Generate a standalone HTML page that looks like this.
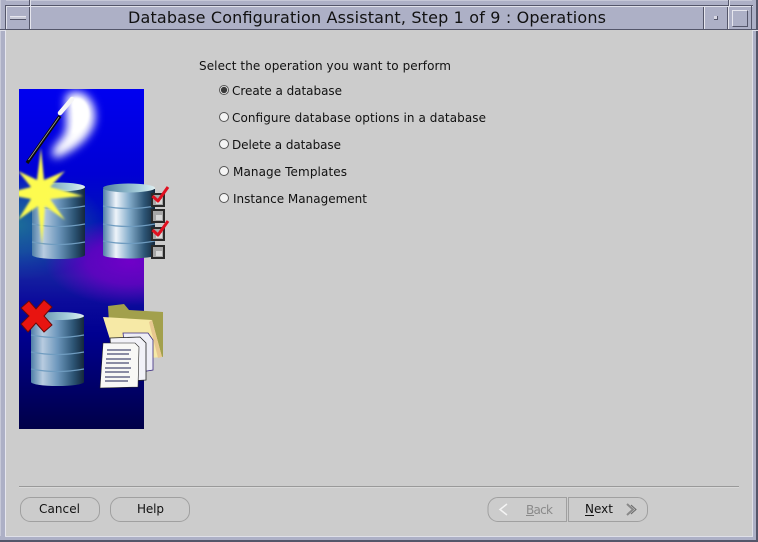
<!DOCTYPE html>
<html><head><meta charset="utf-8"><title>Database Configuration Assistant</title>
<style>html,body{margin:0;padding:0;background:#ccc;width:758px;height:542px;overflow:hidden}svg{display:block}
text{font-family:"DejaVu Sans","Liberation Sans",sans-serif;fill:#111}</style></head><body>
<svg width="758" height="542" viewBox="0 0 758 542" xmlns="http://www.w3.org/2000/svg" shape-rendering="crispEdges">
<defs>
<linearGradient id="bg" x1="0" y1="0" x2="0" y2="1">
<stop offset="0" stop-color="#0000f0"/><stop offset=".25" stop-color="#0000d4"/><stop offset=".42" stop-color="#0016b0"/><stop offset=".55" stop-color="#1420a0"/><stop offset=".62" stop-color="#0c0c9c"/><stop offset=".72" stop-color="#000090"/><stop offset="1" stop-color="#000048"/>
</linearGradient>
<radialGradient id="pur"><stop offset="0" stop-color="#7000c8"/><stop offset=".5" stop-color="#6c00c4" stop-opacity=".8"/><stop offset="1" stop-color="#6c00c4" stop-opacity="0"/></radialGradient>
<radialGradient id="teal"><stop offset="0" stop-color="#1c6e98"/><stop offset=".5" stop-color="#1c629c" stop-opacity=".7"/><stop offset="1" stop-color="#1a58a0" stop-opacity="0"/></radialGradient>
<linearGradient id="cyl" x1="0" y1="0" x2="1" y2="0"><stop offset="0" stop-color="#4f7fa8"/><stop offset=".25" stop-color="#eef4fa"/><stop offset=".5" stop-color="#86aecc"/><stop offset=".8" stop-color="#2c5474"/><stop offset="1" stop-color="#14283c"/></linearGradient>
<linearGradient id="cyl2" x1="0" y1="0" x2="1" y2="0"><stop offset="0" stop-color="#4f7fa8"/><stop offset=".22" stop-color="#b8cce0"/><stop offset=".5" stop-color="#6d97bc"/><stop offset=".8" stop-color="#2c5474"/><stop offset="1" stop-color="#14283c"/></linearGradient>
<linearGradient id="top" x1="0" y1="0" x2="1" y2="0"><stop offset="0" stop-color="#4f7f9e"/><stop offset=".7" stop-color="#a8d0dc"/><stop offset="1" stop-color="#dfeef0"/></linearGradient>
<filter id="bl" x="-60%" y="-60%" width="220%" height="220%"><feGaussianBlur stdDeviation="4.500"/></filter>
<filter id="bl2" x="-50%" y="-50%" width="200%" height="200%"><feGaussianBlur stdDeviation="1"/></filter>
<clipPath id="im"><rect x="19" y="89" width="125" height="340"/></clipPath>
</defs>

<rect width="758" height="542" fill="#ccc"/>
<!-- frame -->
<rect x="0" y="0" width="758" height="6" fill="#adb0c6"/>
<rect x="0" y="0" width="758" height="1" fill="#c6c8d8"/>
<rect x="0" y="0" width="6" height="542" fill="#adb0c6"/>
<rect x="0" y="0" width="1" height="537" fill="#c6c8d8"/>
<rect x="752" y="0" width="6" height="542" fill="#adb0c6"/>
<rect x="0" y="536" width="758" height="6" fill="#adb0c6"/>
<rect x="0" y="540" width="758" height="2" fill="#54566a"/>
<rect x="756" y="0" width="2" height="542" fill="#54566a"/>
<rect x="5" y="30" width="1" height="507" fill="#e6e6ee"/>
<rect x="5" y="536" width="748" height="1" fill="#dfe0e8"/>
<rect x="752" y="30" width="1" height="507" fill="#dfe0e8"/>
<!-- title bar -->
<rect x="6" y="6" width="746" height="23" fill="#adb0c6"/>
<rect x="5" y="5" width="748" height="1" fill="#54566a"/>
<rect x="5" y="6" width="748" height="1" fill="#e0e1ea"/>
<rect x="5" y="5" width="1" height="25" fill="#54566a"/>
<rect x="6" y="6" width="1" height="24" fill="#e0e1ea"/>
<rect x="6" y="29" width="746" height="1" fill="#54566a"/>
<rect x="751" y="6" width="1" height="24" fill="#54566a"/>
<rect x="0" y="29" width="6" height="1" fill="#54566a"/>
<rect x="0" y="30" width="6" height="1" fill="#e0e1ea"/>
<rect x="752" y="29" width="6" height="1" fill="#54566a"/>
<rect x="752" y="30" width="6" height="1" fill="#e0e1ea"/>
<rect x="29" y="0" width="1" height="6" fill="#54566a"/>
<rect x="30" y="0" width="1" height="6" fill="#e0e1ea"/>
<rect x="728" y="0" width="1" height="6" fill="#54566a"/>
<rect x="729" y="0" width="1" height="6" fill="#e0e1ea"/>
<rect x="29" y="7" width="1" height="22" fill="#54566a"/>
<rect x="30" y="7" width="1" height="22" fill="#e6e6ee"/>
<rect x="703" y="7" width="1" height="22" fill="#54566a"/>
<rect x="704" y="7" width="1" height="22" fill="#e6e6ee"/>
<rect x="727" y="7" width="1" height="22" fill="#54566a"/>
<rect x="728" y="7" width="1" height="22" fill="#e6e6ee"/>
<!-- window controls -->
<rect x="10" y="16" width="16" height="3" fill="#c8cad8"/>
<rect x="10" y="16" width="16" height="1" fill="#e6e6ee"/>
<rect x="10" y="19" width="16" height="1" fill="#54566a"/>
<rect x="714" y="16" width="4" height="4" fill="#d8d8e4"/>
<rect x="714" y="19" width="4" height="1" fill="#54566a"/>
<rect x="717" y="16" width="1" height="4" fill="#54566a"/>
<path d="M732 26V10H748" fill="none" stroke="#e6e6ee" transform="translate(.5 .5)"/>
<path d="M732 26H747V10" fill="none" stroke="#54566a" transform="translate(.5 .5)"/>
<g shape-rendering="auto">
<text x="128" y="23" font-size="16" textLength="478" lengthAdjust="spacing">Database Configuration Assistant, Step 1 of 9 : Operations</text>
<text x="199" y="70" font-size="12" textLength="252" lengthAdjust="spacing">Select the operation you want to perform</text>
<text x="232" y="95" font-size="12" textLength="110" lengthAdjust="spacing">Create a database</text>
<text x="232" y="122" font-size="12" textLength="254" lengthAdjust="spacing">Configure database options in a database</text>
<text x="232" y="149" font-size="12" textLength="109" lengthAdjust="spacing">Delete a database</text>
<text x="233" y="176" font-size="12" textLength="114" lengthAdjust="spacing">Manage Templates</text>
<text x="233" y="203" font-size="12" textLength="134" lengthAdjust="spacing">Instance Management</text>
<!-- radios -->
<g stroke="#555" stroke-width="1" fill="#f4f4f4">
<circle cx="224" cy="90" r="4.500"/><circle cx="224" cy="117" r="4.500"/><circle cx="224" cy="144" r="4.500"/><circle cx="224" cy="171" r="4.500"/><circle cx="224" cy="198" r="4.500"/>
</g>
<circle cx="224" cy="90" r="3.200" fill="#3a3a3a"/>

<!-- picture -->
<g clip-path="url(#im)">
<rect x="19" y="89" width="125" height="340" fill="url(#bg)"/>
<ellipse cx="15" cy="225" rx="90" ry="55" fill="url(#teal)"/>
<ellipse cx="130" cy="262" rx="85" ry="44" fill="url(#pur)"/>
<!-- glow -->
<path d="M68 94C82 86 96 100 95 118C94 134 78 150 56 158C48 156 54 146 60 140C68 132 66 124 66 114C66 104 64 98 68 94Z" fill="#fff" filter="url(#bl)"/>
<path d="M72 98C84 96 90 106 89 116C88 126 80 132 72 134C74 124 74 112 72 106Z" fill="#fff" filter="url(#bl2)"/>
<!-- wand -->
<path d="M27 163L60 116" stroke="#0c0c0c" stroke-width="3.400" fill="none"/>
<path d="M28.500 160L59 117" stroke="#a0a0a0" stroke-width=".8" fill="none"/>
<path d="M60 113L72 99" stroke="#f6f6f6" stroke-width="4.500" stroke-linecap="round" fill="none"/>
<!-- cylinder 1 -->
<rect x="32" y="187" width="53" height="68" fill="url(#cyl2)"/>
<ellipse cx="58.500" cy="255" rx="26.500" ry="4" fill="url(#cyl2)"/>
<ellipse cx="58.500" cy="187" rx="26.500" ry="4.500" fill="url(#top)"/>
<g fill="none" stroke="#6f9cc0" stroke-width="1.200"><path d="M32 206Q58 211 85 206"/><path d="M32 224Q58 229 85 224"/><path d="M32 242Q58 247 85 242"/></g>
<!-- star -->
<path d="M41 148L44 180L65 171L50 187L83 196L50 199L65 220L45 206L42 245L38 206L18 220L31 199L4 194L31 187L18 171L37 180Z" fill="#fdfb50" filter="url(#bl2)"/>
<circle cx="41" cy="193" r="9" fill="#fdfb50" filter="url(#bl2)"/>
<!-- cylinder 3 -->
<rect x="31" y="316" width="53" height="66" fill="url(#cyl2)"/>
<ellipse cx="57.500" cy="382" rx="26.500" ry="4" fill="url(#cyl2)"/>
<ellipse cx="57.500" cy="316" rx="26.500" ry="4" fill="url(#top)"/>
<g fill="none" stroke="#6f9cc0" stroke-width="1.200"><path d="M31 335Q57 340 84 335"/><path d="M31 352Q57 357 84 352"/><path d="M31 369Q57 374 84 369"/></g>
</g>
<!-- cylinder 2 (overflows picture) -->
<rect x="103" y="189" width="52" height="66" fill="url(#cyl)"/>
<ellipse cx="129" cy="255" rx="26" ry="3.500" fill="url(#cyl)"/>
<ellipse cx="129" cy="188" rx="26" ry="4.500" fill="url(#top)"/>
<g fill="none" stroke="#6f9cc0" stroke-width="1.200"><path d="M103 206Q129 211 155 206"/><path d="M103 224Q129 229 155 224"/><path d="M103 241Q129 246 155 241"/></g>
<!-- checkboxes -->
<g fill="#a8a8a8" stroke="#2a2a2a" stroke-width="2">
<rect x="152" y="194" width="12" height="12"/><rect x="152" y="210" width="12" height="12"/><rect x="152" y="228" width="12" height="12"/><rect x="152" y="246" width="12" height="12"/>
</g>
<g fill="#d8d8d8">
<rect x="156" y="199" width="6" height="5"/><rect x="156" y="215" width="6" height="5"/><rect x="156" y="233" width="6" height="5"/><rect x="156" y="251" width="6" height="5"/>
</g>
<g fill="none" stroke="#e01020" stroke-width="3" stroke-linejoin="round">
<path d="M152.500 196L158 201L168 187"/><path d="M152.500 230L158 235L168 221"/>
</g>
<!-- X -->
<path d="M29 301L36 309L44 300L52 307L44 316L52 325L44 332L36 323L28 332L21 324L29 316L21 308Z" fill="#e81410" stroke="#6a0a08" stroke-width="1"/>
<!-- folder -->
<path d="M108 306L124 304L129 310L163 312L163 357L110 340Z" fill="#a2a04c"/>
<path d="M103 317L152 320L162 357L150 358L112 346Z" fill="#f6e9a6"/>
<path d="M152 320L162 357L158 358L149 322Z" fill="#e8c890"/>
<!-- docs -->
<path d="M123 333L148 333L153 340L153 370L128 374Z" fill="#eeeef6" stroke="#3a2a80" stroke-width=".8"/>
<path d="M110 338L140 337L146 343L146 380L113 382Z" fill="#f2f2f8" stroke="#222" stroke-width=".8"/>
<path d="M103 343L135 343L139 347L138 387L100 388Z" fill="#f8f8f6" stroke="#222" stroke-width=".6"/>
<g stroke="#8a8ca4" stroke-width="2" fill="none">
<path d="M107 350H131M107 354H129"/><path d="M106 359H131M106 363H129"/><path d="M105 368H131M105 372H129"/><path d="M105 377H130M105 381H128"/>
</g>
</g>

<!-- separator -->
<rect x="19" y="486" width="720" height="1" fill="#999"/>
<rect x="19" y="487" width="720" height="1" fill="#d8d8d8"/>

<!-- buttons -->
<g shape-rendering="auto" fill="none" stroke="#a0a0a0" stroke-width="1">
<rect x="20.500" y="497.500" width="79" height="24" rx="10"/>
<rect x="110.500" y="497.500" width="79" height="24" rx="10"/>
<path d="M566.500 497.500H498a10 10 0 0 0-10 10V511.500a10 10 0 0 0 10 10H566.500Z"/>
<path d="M568.500 497.500H637.500a10 10 0 0 1 10 10V511.500a10 10 0 0 1-10 10H568.500Z"/>
</g>
<g shape-rendering="auto">
<text x="39" y="513" font-size="12" textLength="41" lengthAdjust="spacing">Cancel</text>
<text x="137" y="513" font-size="12" textLength="27" lengthAdjust="spacing">Help</text>
<text x="526" y="514" font-size="12" textLength="27" lengthAdjust="spacing" style="fill:#8a8a8a">Back</text>
<text x="585" y="513" font-size="12" textLength="28" lengthAdjust="spacing">Next</text>
<path d="M507 504L500 509.500L507 515" fill="none" stroke="#f4f4f4" stroke-width="1.500"/>
<path d="M627 504L633 509.500L627 515" fill="none" stroke="#888" stroke-width="2"/>
<path d="M631 505L636 509.500L631 514" fill="none" stroke="#666" stroke-width="1"/>
</g>
<rect x="526" y="515" width="8" height="1" fill="#8a8a8a"/>
<rect x="585" y="515" width="9" height="1" fill="#111"/>
</svg>
</body></html>
